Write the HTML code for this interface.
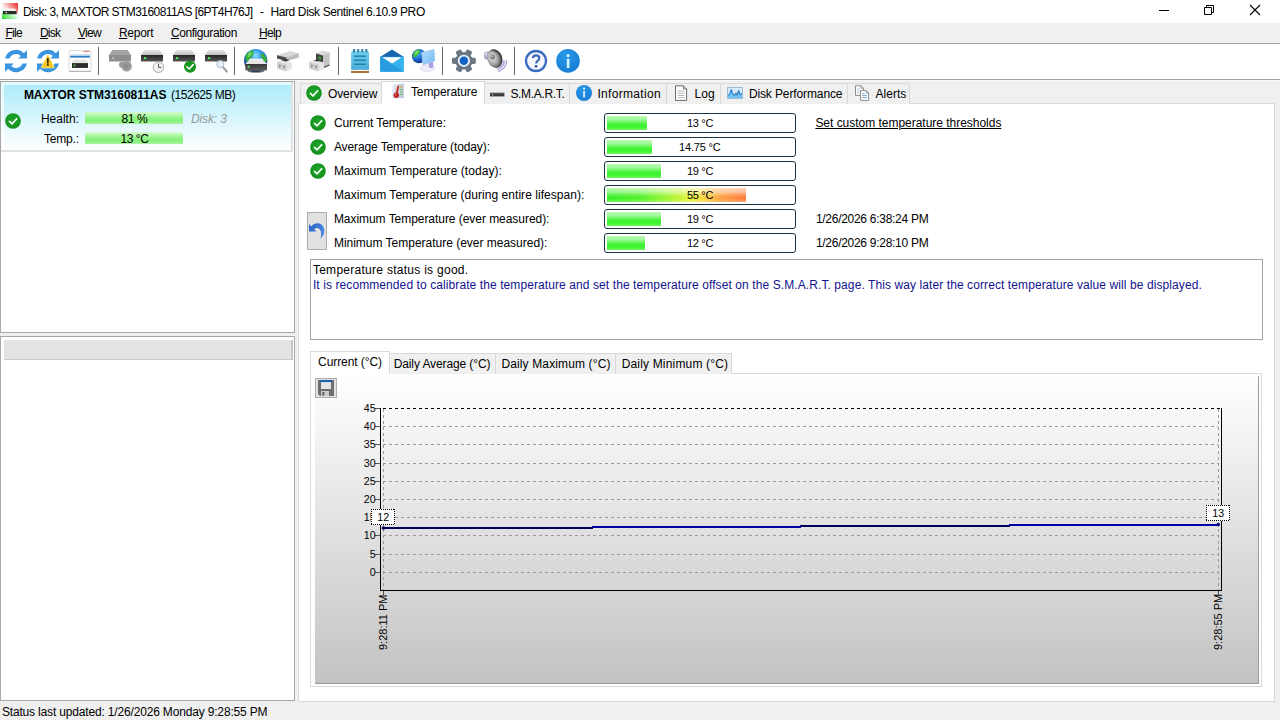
<!DOCTYPE html>
<html><head><meta charset="utf-8"><title>Hard Disk Sentinel</title>
<style>
html,body{margin:0;padding:0;}
body{width:1280px;height:726px;position:relative;overflow:hidden;background:#fff;font-family:'Liberation Sans',sans-serif;font-size:12px;color:#000;}
div,span,svg{position:absolute;box-sizing:border-box;}
.t{white-space:pre;line-height:normal;}
.ck{width:16px;height:16px;}
.pb{left:604px;width:192px;height:20px;border:1px solid #1c3442;border-radius:3px;background:#fff;}
.pf{left:607px;height:14px;}
.pf.g{background:linear-gradient(rgba(255,255,255,.66) 0%,rgba(255,255,255,.5) 28%,rgba(255,255,255,.1) 55%,rgba(255,255,255,0) 75%,rgba(255,255,255,.28) 100%),#38f22a;}
.pf.h{background:linear-gradient(rgba(255,255,255,.66) 0%,rgba(255,255,255,.5) 28%,rgba(255,255,255,.1) 55%,rgba(255,255,255,0) 75%,rgba(255,255,255,.28) 100%),linear-gradient(90deg,#34f024 0%,#54f02a 25%,#a4f430 45%,#e6f43a 60%,#fcd23e 70%,#fc9c40 83%,#fc7a3a 100%);}
.tab{top:83px;height:21px;background:#f0f0f0;border:1px solid #d9d9d9;border-bottom:none;}
.itab{top:353px;height:21px;background:#f0f0f0;border:1px solid #d9d9d9;border-bottom:none;}
</style></head><body>
<svg width="0" height="0" style="left:-10px"><defs>
<radialGradient id="ckg" cx=".5" cy=".45" r=".6"><stop offset="0" stop-color="#1fa62b"/><stop offset=".75" stop-color="#159520"/><stop offset="1" stop-color="#0b7a16"/></radialGradient>
<g id="ck"><circle cx="8" cy="8" r="7.8" fill="url(#ckg)"/><path d="M4.4 8.4 L7 10.9 L11.7 5.7" fill="none" stroke="#fff" stroke-width="1.6" stroke-linecap="round" stroke-linejoin="round"/></g>
</defs></svg>
<!-- title bar -->
<div style="left:0;top:0;width:1280px;height:23px;background:#fff"></div>
<!-- menu -->
<div style="left:0;top:23px;width:1280px;height:20px;background:#f0f0f0"></div>
<div style="left:0;top:43px;width:1280px;height:1px;background:#a0a0a0"></div>
<!-- toolbar -->
<div style="left:0;top:44px;width:1280px;height:35px;background:#fff"></div>
<div style="left:0;top:79px;width:1280px;height:1px;background:#a0a0a0"></div>
<!-- main bg -->
<div style="left:0;top:80px;width:1280px;height:640px;background:#f0f0f0"></div>
<div style="left:0;top:80px;width:1280px;height:1px;background:#f8f8f8"></div>
<!-- left panels -->
<div style="left:0;top:81px;width:295px;height:252px;background:#fff;border:1px solid #a7a7a7"></div>
<div style="left:1px;top:82px;width:292px;height:70px;background:#e0e2e3"></div>
<div style="left:1px;top:82px;width:290px;height:68px;background:linear-gradient(#e2fbfd 0%,#f2fdfe 50%,#ffffff 100%)"></div>
<div style="left:4px;top:85px;width:287px;height:65px;background:linear-gradient(#b0ecfa 0%,#bdeffb 20%,#d6f5fc 50%,#f0fbfe 80%,#ffffff 100%)"></div>
<div style="left:85px;top:112px;width:98px;height:12px;background:linear-gradient(#d8fcd2 0%,#98f58c 45%,#84f078 70%,#a8f5a0 100%)"></div>
<div style="left:85px;top:132px;width:98px;height:12px;background:linear-gradient(#d8fcd2 0%,#98f58c 45%,#84f078 70%,#a8f5a0 100%)"></div>
<svg class="ck" style="left:5px;top:113px" viewBox="0 0 16 16"><use href="#ck"/></svg>
<div style="left:0;top:336px;width:295px;height:365px;background:#fff;border:1px solid #a7a7a7"></div>
<div style="left:4px;top:340px;width:289px;height:20px;background:#e4e4e4;border-bottom:1px solid #c8c8c8;border-right:2px solid #c6c6c6"></div>
<!-- outer tab page -->
<div style="left:298px;top:103px;width:977px;height:599px;background:#fff;border:1px solid #d9d9d9"></div>
<div class="tab" style="left:300px;width:82px"></div>
<div class="tab" style="left:484px;width:86px"></div>
<div class="tab" style="left:569px;width:98px"></div>
<div class="tab" style="left:666px;width:55px"></div>
<div class="tab" style="left:720px;width:128px"></div>
<div class="tab" style="left:847px;width:63px"></div>
<div class="tab" style="left:381px;width:104px;top:81px;height:23px;background:#fff"></div>
<div class="pb" style="top:113px"></div><div class="pf g" style="top:116px;width:40px"></div>
<svg class="ck" style="left:310px;top:115px" viewBox="0 0 16 16"><use href="#ck"/></svg>
<div class="pb" style="top:137px"></div><div class="pf g" style="top:140px;width:45px"></div>
<svg class="ck" style="left:310px;top:139px" viewBox="0 0 16 16"><use href="#ck"/></svg>
<div class="pb" style="top:161px"></div><div class="pf g" style="top:164px;width:54px"></div>
<svg class="ck" style="left:310px;top:163px" viewBox="0 0 16 16"><use href="#ck"/></svg>
<div class="pb" style="top:185px"></div><div class="pf h" style="top:188px;width:139px"></div>
<div class="pb" style="top:209px"></div><div class="pf g" style="top:212px;width:54px"></div>
<div class="pb" style="top:233px"></div><div class="pf g" style="top:236px;width:38px"></div>
<!-- undo button -->
<div style="left:307px;top:212px;width:20px;height:38px;background:#e1e1e1;border:1px solid #adadad"></div>
<!-- message -->
<div style="left:310px;top:259px;width:953px;height:81px;background:#fff;border:1px solid #a4a4a4"></div>
<!-- inner tabs -->
<div style="left:310px;top:373px;width:952px;height:314px;background:#fff;border:1px solid #d9d9d9"></div>
<div class="itab" style="left:389px;width:107px"></div>
<div class="itab" style="left:495px;width:121px"></div>
<div class="itab" style="left:615px;width:117px"></div>
<div class="itab" style="left:310px;width:80px;top:351px;height:23px;background:#fff"></div>
<!-- chart panel -->
<div style="left:315px;top:376px;width:944px;height:308px;background:linear-gradient(#ffffff 0%,#c3c3c3 100%);border-right:1px solid #9a9a9a;border-bottom:1px solid #9a9a9a"></div>
<div style="left:315px;top:378px;width:22px;height:20px;background:#e1e1e1;border:1px solid #adadad"></div>
<svg style="position:absolute;left:0;top:0" width="1280" height="726" viewBox="0 0 1280 726" font-family="'Liberation Sans',sans-serif" font-size="10.67">
<defs><linearGradient id="pbg" x1="0" y1="0" x2="0" y2="1"><stop offset="0" stop-color="#fafafa"/><stop offset="1" stop-color="#d9d9d9"/></linearGradient></defs>
<line x1="375" x2="380" y1="408.5" y2="408.5" stroke="#555" stroke-width="1"/>
<text x="375.6" y="412.1" text-anchor="end" fill="#000">45</text>
<line x1="383" x2="1218" y1="426.5" y2="426.5" stroke="#9b9b9b" stroke-dasharray="3 3" stroke-width="1"/>
<line x1="375" x2="380" y1="426.5" y2="426.5" stroke="#555" stroke-width="1"/>
<text x="375.6" y="430.1" text-anchor="end" fill="#000">40</text>
<line x1="383" x2="1218" y1="444.5" y2="444.5" stroke="#9b9b9b" stroke-dasharray="3 3" stroke-width="1"/>
<line x1="375" x2="380" y1="444.5" y2="444.5" stroke="#555" stroke-width="1"/>
<text x="375.6" y="448.1" text-anchor="end" fill="#000">35</text>
<line x1="383" x2="1218" y1="463.5" y2="463.5" stroke="#9b9b9b" stroke-dasharray="3 3" stroke-width="1"/>
<line x1="375" x2="380" y1="463.5" y2="463.5" stroke="#555" stroke-width="1"/>
<text x="375.6" y="467.1" text-anchor="end" fill="#000">30</text>
<line x1="383" x2="1218" y1="481.5" y2="481.5" stroke="#9b9b9b" stroke-dasharray="3 3" stroke-width="1"/>
<line x1="375" x2="380" y1="481.5" y2="481.5" stroke="#555" stroke-width="1"/>
<text x="375.6" y="485.1" text-anchor="end" fill="#000">25</text>
<line x1="383" x2="1218" y1="499.5" y2="499.5" stroke="#9b9b9b" stroke-dasharray="3 3" stroke-width="1"/>
<line x1="375" x2="380" y1="499.5" y2="499.5" stroke="#555" stroke-width="1"/>
<text x="375.6" y="503.1" text-anchor="end" fill="#000">20</text>
<line x1="383" x2="1218" y1="517.5" y2="517.5" stroke="#9b9b9b" stroke-dasharray="3 3" stroke-width="1"/>
<line x1="375" x2="380" y1="517.5" y2="517.5" stroke="#555" stroke-width="1"/>
<text x="375.6" y="521.1" text-anchor="end" fill="#000">15</text>
<line x1="383" x2="1218" y1="535.5" y2="535.5" stroke="#9b9b9b" stroke-dasharray="3 3" stroke-width="1"/>
<line x1="375" x2="380" y1="535.5" y2="535.5" stroke="#555" stroke-width="1"/>
<text x="375.6" y="539.1" text-anchor="end" fill="#000">10</text>
<line x1="383" x2="1218" y1="554.5" y2="554.5" stroke="#9b9b9b" stroke-dasharray="3 3" stroke-width="1"/>
<line x1="375" x2="380" y1="554.5" y2="554.5" stroke="#555" stroke-width="1"/>
<text x="375.6" y="558.1" text-anchor="end" fill="#000">5</text>
<line x1="383" x2="1218" y1="572.5" y2="572.5" stroke="#9b9b9b" stroke-dasharray="3 3" stroke-width="1"/>
<line x1="375" x2="380" y1="572.5" y2="572.5" stroke="#555" stroke-width="1"/>
<text x="375.6" y="576.1" text-anchor="end" fill="#000">0</text>
<line x1="383.5" x2="383.5" y1="409" y2="590" stroke="#9b9b9b" stroke-dasharray="3 3"/>
<line x1="1218.5" x2="1218.5" y1="409" y2="590" stroke="#9b9b9b" stroke-dasharray="3 3"/>
<line x1="383" x2="1221" y1="408.5" y2="408.5" stroke="#000" stroke-dasharray="3 3"/>
<line x1="380.5" x2="380.5" y1="408" y2="591" stroke="#000"/>
<line x1="380" x2="1222" y1="590.5" y2="590.5" stroke="#000"/>
<line x1="1221.5" x2="1221.5" y1="408" y2="591" stroke="#000"/>
<line x1="383.5" x2="383.5" y1="591" y2="595" stroke="#555"/>
<line x1="1218.5" x2="1218.5" y1="591" y2="595" stroke="#555"/>
<rect x="383" y="527" width="210" height="2" fill="#00005e"/>
<rect x="592" y="526" width="209" height="2" fill="#0000a6"/>
<rect x="800" y="525" width="210" height="2" fill="#00005e"/>
<rect x="1009" y="524" width="210" height="2" fill="#0000a6"/>
<circle cx="383.5" cy="528" r="1.8" fill="#00005e"/><circle cx="1218.3" cy="524.6" r="1.8" fill="#000070"/>
<g shape-rendering="crispEdges" stroke="#000" stroke-dasharray="1 1"><rect x="371" y="509" width="24" height="16" fill="#fff" stroke="none"/><line x1="371" x2="395" y1="509.5" y2="509.5"/><line x1="371" x2="395" y1="524.5" y2="524.5"/><line x1="371.5" x2="371.5" y1="509" y2="525"/><line x1="394.5" x2="394.5" y1="509" y2="525"/></g>
<text x="383.2" y="521" text-anchor="middle" font-size="10.67">12</text>
<g shape-rendering="crispEdges" stroke="#000" stroke-dasharray="1 1"><rect x="1206" y="505" width="24" height="16" fill="#fff" stroke="none"/><line x1="1206" x2="1230" y1="505.5" y2="505.5"/><line x1="1206" x2="1230" y1="520.5" y2="520.5"/><line x1="1206.5" x2="1206.5" y1="505" y2="521"/><line x1="1229.5" x2="1229.5" y1="505" y2="521"/></g>
<text x="1218.2" y="517" text-anchor="middle" font-size="10.67">13</text>
<text transform="translate(387.3,650) rotate(-90)" x="0" y="0" font-size="11">9:28:11 PM</text>
<text transform="translate(1222,650) rotate(-90)" x="0" y="0" font-size="11">9:28:55 PM</text>
</svg>
<!-- status -->
<div style="left:0;top:702px;width:1280px;height:18px;background:#f0f0f0"></div>
<div style="left:0;top:720px;width:1280px;height:6px;background:#fff"></div>
<!-- ICONS -->
<svg style="left:0;top:0" width="1280" height="110" viewBox="0 0 1280 110">
<defs>
<linearGradient id="tiR" x1="1" y1="0" x2="0.1" y2="0.9"><stop offset="0" stop-color="#f03838"/><stop offset=".55" stop-color="#f8b0b0" stop-opacity=".7"/><stop offset="1" stop-color="#fff" stop-opacity="0"/></linearGradient>
<linearGradient id="tiG" x1="0" y1="1" x2="0.9" y2="0.2"><stop offset="0" stop-color="#28e028"/><stop offset=".5" stop-color="#a8f0a8" stop-opacity=".7"/><stop offset="1" stop-color="#fff" stop-opacity="0"/></linearGradient>
<linearGradient id="dkTop" x1="0" y1="0" x2="0" y2="1"><stop offset="0" stop-color="#e6e6e6"/><stop offset="1" stop-color="#bdbdbd"/></linearGradient>
<linearGradient id="dkBody" x1="0" y1="0" x2="0" y2="1"><stop offset="0" stop-color="#262626"/><stop offset="1" stop-color="#555"/></linearGradient>
<radialGradient id="globe" cx=".45" cy=".3" r=".75"><stop offset="0" stop-color="#6cc8ff"/><stop offset=".45" stop-color="#2a84e0"/><stop offset="1" stop-color="#0c3c94"/></radialGradient>
<radialGradient id="infoG" cx=".4" cy=".3" r=".8"><stop offset="0" stop-color="#2a98e8"/><stop offset="1" stop-color="#157cd4"/></radialGradient>
<radialGradient id="spk" cx=".4" cy=".4" r=".7"><stop offset="0" stop-color="#f4f4f4"/><stop offset=".5" stop-color="#9a9a9a"/><stop offset="1" stop-color="#5a5a5a"/></radialGradient>
<g id="disk">
  <path d="M3.4 0 L18.6 0 L22 5 L0 5 Z" fill="url(#dkTop)"/>
  <rect x="0" y="5" width="22" height="6.5" fill="url(#dkBody)"/>
  <rect x="3" y="7" width="2.2" height="2.2" fill="#4fe04f"/>
</g>
<g id="refresh" fill="#3a94e0">
  <path d="M1.1 9.6 A11.1 11.1 0 0 1 19.85 4.15 L23 1.1 L23 9.6 L14.2 9.6 L16.9 7 A7 7 0 0 0 5.43 9.6 Z"/>
  <path d="M22.9 14.4 A11.1 11.1 0 0 1 4.15 19.85 L1 22.9 L1 14.4 L9.8 14.4 L7.1 17 A7 7 0 0 0 18.57 14.4 Z"/>
</g>
</defs>
<!-- title icon -->
<linearGradient id="tiR2" x1="1" y1="0.2" x2="0" y2="0.6"><stop offset="0" stop-color="#f23636"/><stop offset=".35" stop-color="#f68080"/><stop offset=".8" stop-color="#fde4e4"/><stop offset="1" stop-color="#fff"/></linearGradient>
<linearGradient id="tiG2" x1="0" y1="0.8" x2="1" y2="0.3"><stop offset="0" stop-color="#2fe02f"/><stop offset=".4" stop-color="#8cf08c"/><stop offset=".8" stop-color="#e6fbe6"/><stop offset="1" stop-color="#fff"/></linearGradient>
<rect x="2" y="3" width="16" height="9" fill="url(#tiR2)"/>
<rect x="2" y="12" width="16" height="7" fill="url(#tiG2)"/>
<rect x="2" y="9" width="2" height="4" fill="#d8f6d8" opacity=".8"/>
<rect x="16.6" y="11" width="1.4" height="3" fill="#f6b0b0" opacity=".8"/>
<path d="M5 8.6 L15 8.6 L16.6 11 L3.4 11 Z" fill="#f6f4f4" opacity=".92"/>
<rect x="3" y="11" width="13.6" height="3.2" fill="#263026"/>
<rect x="5.6" y="12" width="1.4" height="1.3" fill="#e8ffe8"/>
<!-- window controls -->
<g stroke="#000" stroke-width="1" fill="none">
<path d="M1159 10.5 H1169"/>
<path d="M1204.5 7.5 H1211.5 V14.5 H1204.5 Z"/>
<path d="M1206.5 7.5 V5.5 H1213.5 V12.5 H1211.5"/>
<path d="M1250 5 L1260 15 M1260 5 L1250 15" stroke-width="1.1"/>
</g>
<!-- toolbar separators -->
<g fill="#6a6a6a">
<rect x="98" y="47" width="1" height="28"/><rect x="234" y="47" width="1" height="28"/><rect x="338" y="47" width="1" height="28"/><rect x="442" y="47" width="1" height="28"/><rect x="514" y="47" width="1" height="28"/>
</g>
<!-- 1 refresh -->
<use href="#refresh" x="4" y="49"/>
<!-- 2 refresh + warning -->
<use href="#refresh" x="36" y="49"/>
<path d="M47.8 54.2 L54.2 67 Q54.5 67.9 53.6 67.9 L42 67.9 Q41.1 67.9 41.4 67 Z" fill="#f7c822" stroke="#fdf0b0" stroke-width=".7"/>
<rect x="47.05" y="58.2" width="1.6" height="5.4" fill="#2a1a00"/><rect x="47.05" y="64.1" width="1.6" height="1.6" fill="#2a1a00"/>
<!-- 3 window with disk -->
<rect x="69" y="50.5" width="22" height="20.5" rx="1" fill="#fdfdfd" stroke="#d4d4d4" stroke-width=".8"/>
<rect x="69" y="71" width="22" height="1" fill="#b8b8b8"/>
<rect x="70.2" y="55.5" width="19.6" height="2.1" fill="#2a7cc4"/>
<rect x="70.2" y="53.8" width="19.6" height="1.7" fill="#d6e8f6"/>
<rect x="83.4" y="50.9" width="6.2" height=".9" fill="#e46a6a"/>
<path d="M73.6 59.8 L86.2 59.8 L88 63.1 L72 63.1 Z" fill="#e4e4e4"/>
<rect x="72" y="63.1" width="16" height="4.8" fill="#2c2c2c"/>
<rect x="73.8" y="64.6" width="1.6" height="1.6" fill="#5fe05f"/>
<!-- 4 disabled disk -->
<path d="M112.4 50 L127.6 50 L131 55 L109 55 Z" fill="#a4a4a4"/>
<rect x="109" y="55" width="22" height="6.5" fill="#8e8e8e"/>
<rect x="112" y="57" width="2.2" height="2.2" fill="#b4b4b4"/>
<circle cx="122" cy="64.8" r="3" fill="#9a9a9a"/>
<circle cx="126.6" cy="66.2" r="5.2" fill="#9c9c9c"/>
<circle cx="126" cy="66" r="2.6" fill="#8c8c8c"/>
<!-- 5 disk + clock -->
<use href="#disk" x="141" y="50"/>
<circle cx="158.5" cy="67.2" r="5.3" fill="#f2f2f2" stroke="#a8a8a8" stroke-width="1"/>
<path d="M158.5 63.6 V67.4 H161.4" fill="none" stroke="#555" stroke-width="1"/>
<!-- 6 disk + check -->
<use href="#disk" x="173" y="50"/>
<circle cx="190" cy="66.8" r="6" fill="#15951f"/>
<path d="M187 66.9 L189.2 69 L193.2 64.6" fill="none" stroke="#fff" stroke-width="1.6" stroke-linecap="round" stroke-linejoin="round"/>
<!-- 7 disk + magnifier -->
<use href="#disk" x="205" y="50"/>
<path d="M222.8 66.8 L226.8 71.6" stroke="#9a9a9a" stroke-width="2" stroke-linecap="round"/>
<circle cx="220.4" cy="64.2" r="3.6" fill="#e4eefc" stroke="#b4bcc8" stroke-width="1"/>
<!-- 8 globe + disk -->
<radialGradient id="globe8" cx=".5" cy=".28" r=".8"><stop offset="0" stop-color="#8ce4ff"/><stop offset=".3" stop-color="#3a9cec"/><stop offset=".65" stop-color="#1a5cc0"/><stop offset="1" stop-color="#0a2870"/></radialGradient>
<circle cx="255.7" cy="60.5" r="11.6" fill="url(#globe8)"/>
<path d="M246.2 54.6 Q248.6 51 253 50 Q254.4 53 252 56.6 Q250.6 60 247 62 Q244.4 59 246.2 54.6 Z" fill="#35b035"/>
<path d="M248 53.6 Q250 51.6 252 51.4 Q252.4 53.6 250.6 55.6 Q249 57.6 247.4 57.8 Z" fill="#7ce06a" opacity=".8"/>
<path d="M261.6 52.4 Q265.6 55 267 60 Q266.4 63 264.4 62 Q262 58.6 261 55.6 Z" fill="#35b035"/>
<radialGradient id="gshade" cx=".52" cy=".3" r=".78"><stop offset="0" stop-color="#04144a" stop-opacity="0"/><stop offset=".55" stop-color="#04144a" stop-opacity="0"/><stop offset="1" stop-color="#04144a" stop-opacity=".7"/></radialGradient>
<circle cx="255.7" cy="60.5" r="11.6" fill="url(#gshade)"/>
<ellipse cx="256" cy="71" rx="8.6" ry="1.7" fill="#3c4654" opacity=".75"/>
<path d="M250 58.7 L262 58.7 L267 64 L245.4 64 Z" fill="#e6e6e6"/>
<path d="M250 58.7 L262 58.7 L263 59.8 L249 59.8 Z" fill="#f8f8f8"/>
<rect x="245.4" y="64" width="21.6" height="6.4" fill="url(#dkBody8)"/>
<linearGradient id="dkBody8" x1="0" y1="0" x2="0" y2="1"><stop offset="0" stop-color="#343434"/><stop offset="1" stop-color="#5e5e5e"/></linearGradient>
<rect x="247.7" y="65.8" width="2" height="2" fill="#4fe04f"/>
<!-- 9 gray boxes -->
<path d="M277 55.2 L290 51 L298.7 53.2 L298.7 57.4 L286.5 61 L277 58.6 Z" fill="#d8d8d8"/>
<path d="M277 55.2 L286.5 57.4 L286.5 61 L277 58.6 Z" fill="#4a4a4a"/>
<path d="M286.5 57.4 L298.7 53.2 L298.7 57.4 L286.5 61 Z" fill="#bcbcbc"/>
<path d="M277 62 L282 60 L292 62.6 L292 68.6 L286.6 71.4 L277 68.6 Z" fill="#e4e4e4"/>
<path d="M277 62 L286.6 64.6 L286.6 71.4 L277 68.6 Z" fill="#cfcfcf"/>
<path d="M281.5 60.2 L285.5 58.8 L289.5 60.2 L286 61.5 Z" fill="#3a3a3a"/>
<rect x="279.2" y="64.6" width="1.3" height="2.6" fill="#7a7a7a"/><rect x="283.4" y="65.6" width="1.3" height="2.6" fill="#7a7a7a"/>
<!-- 10 gray tower -->
<path d="M316 53.4 L322.6 50.4 L329.6 52.4 L329.6 64 L323 67 L316 65 Z" fill="#dadada"/>
<path d="M316 53.4 L323 55.4 L323 67 L316 65 Z" fill="#3c463c"/>
<rect x="318.4" y="56.6" width="2.6" height="3" fill="#4aa04a" opacity=".8"/>
<path d="M323 55.4 L329.6 52.4 L329.6 64 L323 67 Z" fill="#c4c4c4"/>
<path d="M323 67.2 L329.6 64.2 L329.6 65.4 L323 68.4 Z" fill="#3a3a3a"/>
<path d="M309 62 L314 60 L324 62.6 L324 68.6 L318.6 71.4 L309 68.6 Z" fill="#e4e4e4"/>
<path d="M309 62 L318.6 64.6 L318.6 71.4 L309 68.6 Z" fill="#cfcfcf"/>
<path d="M313.5 60.4 L317 59.4 L320 60.6 L317.4 61.6 Z" fill="#3a3a3a"/>
<rect x="311.2" y="64.6" width="1.3" height="2.6" fill="#7a7a7a"/><rect x="315.4" y="65.6" width="1.3" height="2.6" fill="#7a7a7a"/>
<!-- 11 notepad -->
<linearGradient id="npg" x1="0" y1="0" x2="0" y2="1"><stop offset="0" stop-color="#70d2f2"/><stop offset="1" stop-color="#4aaada"/></linearGradient>
<rect x="351.1" y="51.2" width="17.9" height="19" rx="1" fill="url(#npg)"/>
<g fill="#2a7ea8"><rect x="353.1" y="49" width="2" height="3.6" rx=".5"/><rect x="357.2" y="49" width="2" height="3.6" rx=".5"/><rect x="361.3" y="49" width="2" height="3.6" rx=".5"/><rect x="365.4" y="49" width="2" height="3.6" rx=".5"/></g>
<g fill="#1c82aa"><rect x="354" y="55.4" width="12" height="1.5"/><rect x="354" y="59.5" width="12" height="1.5"/><rect x="354" y="63.5" width="12" height="1.5"/></g>
<rect x="351.1" y="69.8" width="17.9" height="1.3" fill="#f6f2ea"/>
<rect x="351.1" y="71.1" width="17.9" height="1.8" fill="#a5622a"/>
<!-- 12 mail -->
<path d="M380.1 56.9 L392 49.6 L403.9 56.9 Z" fill="#1566b0"/>
<rect x="380.1" y="56.8" width="23.8" height="14.9" fill="#35b2f0"/>
<path d="M380.1 56.8 L403.9 71.7 L380.1 71.7 Z" fill="#289ce0"/>
<path d="M382.4 57.2 L401.6 57.2 L392.1 63.6 Z" fill="#fff"/>
<!-- 13 globe + monitor -->
<radialGradient id="globe13" cx=".35" cy=".3" r=".8"><stop offset="0" stop-color="#58c0ff"/><stop offset=".45" stop-color="#2070d8"/><stop offset="1" stop-color="#082878"/></radialGradient>
<circle cx="419" cy="56.2" r="7.1" fill="url(#globe13)"/>
<path d="M414 52 Q416.5 49.6 420 49.6 Q421 52 418.4 54.6 Q416.4 57.4 413.4 57.4 Q412.4 54.6 414 52 Z" fill="#3cbc3c"/>
<path d="M415.4 52 Q417 50.8 418.6 50.8 Q418.6 52.4 417 53.8 Q416 54.8 415 54.6 Z" fill="#90ec80" opacity=".8"/>
<ellipse cx="427.4" cy="68.3" rx="7.3" ry="3.2" fill="#eeecf8" stroke="#d4d0ec" stroke-width=".6"/>
<path d="M428.4 63 L433 61.6 L433.6 67 Q431 68.6 429.4 67.8 Z" fill="#a89ee0"/>
<linearGradient id="mon" x1="0" y1="0" x2="1" y2="1"><stop offset="0" stop-color="#b4defc"/><stop offset="1" stop-color="#70b8f4"/></linearGradient>
<path d="M421.6 52.6 L434 49.4 L434.8 60.8 L423 64.9 Z" fill="url(#mon)" stroke="#a4c8ec" stroke-width=".8"/>
<!-- 14 gear -->
<g transform="translate(463.9 60.8)">
<g fill="#6d7784">
<circle r="8.7"/>
<rect id="tooth" x="6" y="-3.1" width="5.9" height="6.2" rx="1.4"/>
<use href="#tooth" transform="rotate(60)"/><use href="#tooth" transform="rotate(120)"/><use href="#tooth" transform="rotate(180)"/><use href="#tooth" transform="rotate(240)"/><use href="#tooth" transform="rotate(300)"/>
</g>
<circle r="6.1" fill="#e6f2fe"/><circle r="4.2" fill="#1262c4"/>
</g>
<!-- 15 speaker -->
<g fill="none" stroke="#a59ddc" stroke-width="1.4" stroke-linecap="round" opacity=".95">
<path d="M506.4 60.6 Q507.2 67.6 498.6 71.4"/><path d="M504 61 Q504.6 66 498 69.2"/><path d="M501.6 61.4 Q502 64.8 497.2 67"/>
</g>
<radialGradient id="knob" cx=".4" cy=".35" r=".7"><stop offset="0" stop-color="#e0def0"/><stop offset="1" stop-color="#8c88b8"/></radialGradient>
<ellipse cx="486.8" cy="55.4" rx="2.9" ry="3.9" fill="url(#knob)"/>
<radialGradient id="spk2" cx=".38" cy=".42" r=".62"><stop offset="0" stop-color="#a4a4a4"/><stop offset=".35" stop-color="#c4c4c4"/><stop offset=".7" stop-color="#8a8a8a"/><stop offset="1" stop-color="#3c3c3c"/></radialGradient>
<ellipse cx="494.6" cy="58.5" rx="7.3" ry="9.8" transform="rotate(-22 494.6 58.5)" fill="url(#spk2)"/>
<path d="M490.5 50.5 Q497.5 47.6 501.2 54.4 Q503.4 59.4 502 64 Q501.6 57 497.6 53 Q494.6 50.4 490.5 50.5 Z" fill="#3a3a3a" opacity=".8"/>
<circle cx="492.6" cy="56.8" r="2.3" fill="#7c7c84"/><circle cx="492" cy="56.2" r="1" fill="#c4c4cc"/>
<!-- 16 help -->
<circle cx="536" cy="61" r="10" fill="#f6f8fd" stroke="#3b6cc0" stroke-width="2.3"/>
<path d="M532.9 58 Q533 55.3 536.1 55.3 Q539.3 55.3 539.3 58 Q539.3 59.6 537.6 60.8 Q536.2 61.8 536.2 63.4" fill="none" stroke="#3b68b8" stroke-width="2.2" stroke-linecap="butt"/>
<circle cx="536.1" cy="66.3" r="1.4" fill="#34549c"/>
<!-- 17 info -->
<circle cx="568" cy="60.9" r="11.8" fill="url(#infoG)"/>
<rect x="566.8" y="58.8" width="2.6" height="9.1" rx=".5" fill="#d0f8ff"/><circle cx="568.1" cy="55.6" r="1.55" fill="#d0f8ff"/>

<!-- TAB ICONS -->
<!-- temperature -->
<linearGradient id="tcard" x1="0" y1="0" x2="1" y2="0"><stop offset="0" stop-color="#eef2f8"/><stop offset="1" stop-color="#b8c4dc"/></linearGradient><path d="M392.4 84.4 L403.8 83.4 L403.8 98.2 L391.2 98.6 Z" fill="url(#tcard)"/>
<path d="M397.5 85.8 L399.3 85.8 L397.9 93 L395.6 93 Z" fill="#c43428"/><circle cx="396.3" cy="95.2" r="2.8" fill="#b82a20"/><circle cx="395.6" cy="94.4" r=".9" fill="#e88070"/>
<rect x="400.2" y="86.4" width="2.2" height="1.2" fill="#e8a040"/><rect x="400.2" y="88.8" width="2.2" height="1.2" fill="#70c060"/><rect x="400.2" y="91.2" width="2.2" height="1.2" fill="#70c060"/><rect x="400.2" y="93.6" width="2.2" height="1.2" fill="#70c060"/>
<!-- smart -->
<rect x="490" y="92.4" width="14.4" height="1" fill="#9a9a9a"/><rect x="490" y="93.2" width="14.4" height="3.2" fill="#3a3a3a"/><rect x="492" y="94.2" width="1.2" height="1.2" fill="#b8e0b8"/>
<!-- info -->
<circle cx="584" cy="93" r="8" fill="url(#infoG)"/>
<rect x="583.2" y="91" width="1.7" height="6.4" rx=".4" fill="#e8f6ff"/><circle cx="584.05" cy="88.6" r="1.15" fill="#e8f6ff"/>
<!-- log -->
<path d="M675.5 85.8 L683.4 85.8 L686.6 89 L686.6 100.4 L675.5 100.4 Z" fill="#fff" stroke="#5a5a5a" stroke-width=".9"/>
<path d="M683.4 85.8 L683.4 89 L686.6 89" fill="none" stroke="#5a5a5a" stroke-width=".8"/>
<g fill="#b0b0b0"><rect x="677.6" y="90.6" width="6.8" height=".9"/><rect x="677.6" y="92.8" width="6.8" height=".9"/><rect x="677.6" y="95" width="6.8" height=".9"/><rect x="677.6" y="97.2" width="6.8" height=".9"/></g>
<!-- perf -->
<rect x="727.4" y="87.6" width="15" height="10.8" fill="#d6ebfb" stroke="#8fb0cc" stroke-width=".8"/>
<path d="M727.8 95.6 L729.4 94.4 L731.2 89.6 L732.8 94 L734.4 95.4 L736 93 L737.2 95 L738.7 90.4 L740 94.6 L742 93.6 L742 98 L727.8 98 Z" fill="#72c6f7"/>
<path d="M727.8 95.6 L729.4 94.4 L731.2 89.6 L732.8 94 L734.4 95.4 L736 93 L737.2 95 L738.7 90.4 L740 94.6 L742 93.6" fill="none" stroke="#2c7cc6" stroke-width="1.1" stroke-linejoin="round"/>
<!-- alerts -->
<path d="M855.5 85.8 L861 85.8 L863.5 88.3 L863.5 95.4 L855.5 95.4 Z" fill="#fff" stroke="#8c8c8c" stroke-width="1"/>
<path d="M861 85.8 L861 88.3 L863.5 88.3" fill="none" stroke="#8c8c8c" stroke-width=".8"/>
<g fill="#b4c4d8"><rect x="857" y="88.6" width="3" height=".9"/><rect x="857" y="90.6" width="3.4" height=".9"/><rect x="857" y="92.6" width="3" height=".9"/></g>
<path d="M860.6 90.6 L866.2 90.6 L868.6 93 L868.6 100.4 L860.6 100.4 Z" fill="#fff" stroke="#8c8c8c" stroke-width="1"/>
<path d="M866.2 90.6 L866.2 93 L868.6 93" fill="none" stroke="#8c8c8c" stroke-width=".8"/>
<g fill="#6c98c8"><rect x="862.2" y="93.2" width="2.4" height=".9"/><rect x="862.2" y="95.2" width="4.8" height=".9"/><rect x="862.2" y="97.2" width="4.8" height=".9"/></g>
<!-- overview check -->
<use href="#ck" x="306" y="85"/>
</svg>
<!-- undo arrow + floppy -->
<svg style="left:300px;top:200px" width="50" height="210" viewBox="300 200 50 210">
<path d="M309 224 L309 231.6 L316.6 231.6 L314.4 229.4 C316 227.4 319.4 227.6 320.6 231 C321.5 233.6 321.2 236 320.4 238.6 C323.6 236 325 232 324 228.5 C322.4 222.6 315 221.4 311.4 226.4 Z" fill="url(#undoG)"/>
<linearGradient id="undoG" x1="0" y1="0" x2="1" y2="0.6"><stop offset="0" stop-color="#2a60c4"/><stop offset="1" stop-color="#4c88e2"/></linearGradient>
<path d="M318 380 H334 V396 H320 L318 394 Z" fill="#6e6e6e"/>
<rect x="320" y="380" width="12" height="2" fill="#1c5fa4"/>
<rect x="321" y="382" width="10" height="7" fill="#e4e4e4"/>
<rect x="321" y="382" width="10" height="1" fill="#cfe4f8"/>
<rect x="321" y="391" width="8" height="5" fill="#cacaca"/>
<rect x="322.4" y="392" width="1.8" height="3.6" fill="#555"/>
</svg>

<span class="t" style="left:22.9px;top:5px;font-size:12px;letter-spacing:-0.568px;">Disk: 3, MAXTOR STM3160811AS [6PT4H76J]</span>
<span class="t" style="left:259.9px;top:5px;font-size:12px;letter-spacing:0.000px;">-</span>
<span class="t" style="left:270.4px;top:5px;font-size:12px;letter-spacing:-0.377px;">Hard Disk Sentinel 6.10.9 PRO</span>
<span class="t" style="left:5.4px;top:26px;font-size:12px;letter-spacing:-0.711px;"><u>F</u>ile</span>
<span class="t" style="left:39.9px;top:26px;font-size:12px;letter-spacing:-0.711px;"><u>D</u>isk</span>
<span class="t" style="left:77.9px;top:26px;font-size:12px;letter-spacing:-0.699px;"><u>V</u>iew</span>
<span class="t" style="left:118.9px;top:26px;font-size:12px;letter-spacing:-0.255px;"><u>R</u>eport</span>
<span class="t" style="left:170.9px;top:26px;font-size:12px;letter-spacing:-0.415px;"><u>C</u>onfiguration</span>
<span class="t" style="left:258.9px;top:26px;font-size:12px;letter-spacing:-0.672px;"><u>H</u>elp</span>
<span class="t" style="left:23.9px;top:88px;font-size:12px;letter-spacing:-0.035px;font-weight:bold;">MAXTOR STM3160811AS</span>
<span class="t" style="left:170.9px;top:88px;font-size:12px;letter-spacing:-0.443px;">(152625 MB)</span>
<span class="t" style="left:40.9px;top:112px;font-size:12px;letter-spacing:-0.004px;">Health:</span>
<span class="t" style="left:43.9px;top:132px;font-size:12px;letter-spacing:-0.169px;">Temp.:</span>
<span class="t" style="left:121.4px;top:112px;font-size:12px;letter-spacing:-0.340px;">81 %</span>
<span class="t" style="left:120.4px;top:132px;font-size:12px;letter-spacing:-0.431px;">13 °C</span>
<span class="t" style="left:190.9px;top:112px;font-size:12px;letter-spacing:-0.098px;font-style:italic;color:#9a9a9a;">Disk: 3</span>
<span class="t" style="left:327.9px;top:87px;font-size:12px;letter-spacing:-0.064px;">Overview</span>
<span class="t" style="left:410.9px;top:85px;font-size:12px;letter-spacing:-0.080px;">Temperature</span>
<span class="t" style="left:510.4px;top:87px;font-size:12px;letter-spacing:-0.334px;">S.M.A.R.T.</span>
<span class="t" style="left:597.4px;top:87px;font-size:12px;letter-spacing:0.315px;">Information</span>
<span class="t" style="left:694.4px;top:87px;font-size:12px;letter-spacing:0.156px;">Log</span>
<span class="t" style="left:748.9px;top:87px;font-size:12px;letter-spacing:-0.117px;">Disk Performance</span>
<span class="t" style="left:875.4px;top:87px;font-size:12px;letter-spacing:0.052px;">Alerts</span>
<span class="t" style="left:333.9px;top:116px;font-size:12px;letter-spacing:-0.092px;">Current Temperature:</span>
<span class="t" style="left:333.9px;top:140px;font-size:12px;letter-spacing:-0.107px;">Average Temperature (today):</span>
<span class="t" style="left:333.9px;top:164px;font-size:12px;letter-spacing:0.054px;">Maximum Temperature (today):</span>
<span class="t" style="left:333.9px;top:188px;font-size:12px;letter-spacing:0.043px;">Maximum Temperature (during entire lifespan):</span>
<span class="t" style="left:333.9px;top:212px;font-size:12px;letter-spacing:-0.047px;">Maximum Temperature (ever measured):</span>
<span class="t" style="left:333.9px;top:236px;font-size:12px;letter-spacing:-0.010px;">Minimum Temperature (ever measured):</span>
<span class="t" style="left:686.9px;top:117px;font-size:11px;letter-spacing:-0.288px;">13 °C</span>
<span class="t" style="left:679.1px;top:141px;font-size:11px;letter-spacing:-0.205px;">14.75 °C</span>
<span class="t" style="left:686.9px;top:165px;font-size:11px;letter-spacing:-0.288px;">19 °C</span>
<span class="t" style="left:686.9px;top:189px;font-size:11px;letter-spacing:-0.288px;">55 °C</span>
<span class="t" style="left:686.9px;top:213px;font-size:11px;letter-spacing:-0.288px;">19 °C</span>
<span class="t" style="left:686.9px;top:237px;font-size:11px;letter-spacing:-0.288px;">12 °C</span>
<span class="t" style="left:815.4px;top:116px;font-size:12px;letter-spacing:-0.023px;text-decoration:underline;">Set custom temperature thresholds</span>
<span class="t" style="left:815.9px;top:212px;font-size:12px;letter-spacing:-0.280px;">1/26/2026 6:38:24 PM</span>
<span class="t" style="left:815.9px;top:236px;font-size:12px;letter-spacing:-0.280px;">1/26/2026 9:28:10 PM</span>
<span class="t" style="left:312.9px;top:263px;font-size:12px;letter-spacing:0.275px;">Temperature status is good.</span>
<span class="t" style="left:312.9px;top:278px;font-size:12px;letter-spacing:0.091px;color:#12128e;">It is recommended to calibrate the temperature and set the temperature offset on the S.M.A.R.T. page. This way later the correct temperature value will be displayed.</span>
<span class="t" style="left:318.1px;top:355px;font-size:12px;letter-spacing:-0.076px;">Current (°C)</span>
<span class="t" style="left:393.7px;top:357px;font-size:12px;letter-spacing:-0.107px;">Daily Average (°C)</span>
<span class="t" style="left:501.4px;top:357px;font-size:12px;letter-spacing:0.133px;">Daily Maximum (°C)</span>
<span class="t" style="left:621.7px;top:357px;font-size:12px;letter-spacing:0.168px;">Daily Minimum (°C)</span>
<span class="t" style="left:1.9px;top:705px;font-size:12px;letter-spacing:-0.167px;">Status last updated: 1/26/2026 Monday 9:28:55 PM</span>
</body></html>
